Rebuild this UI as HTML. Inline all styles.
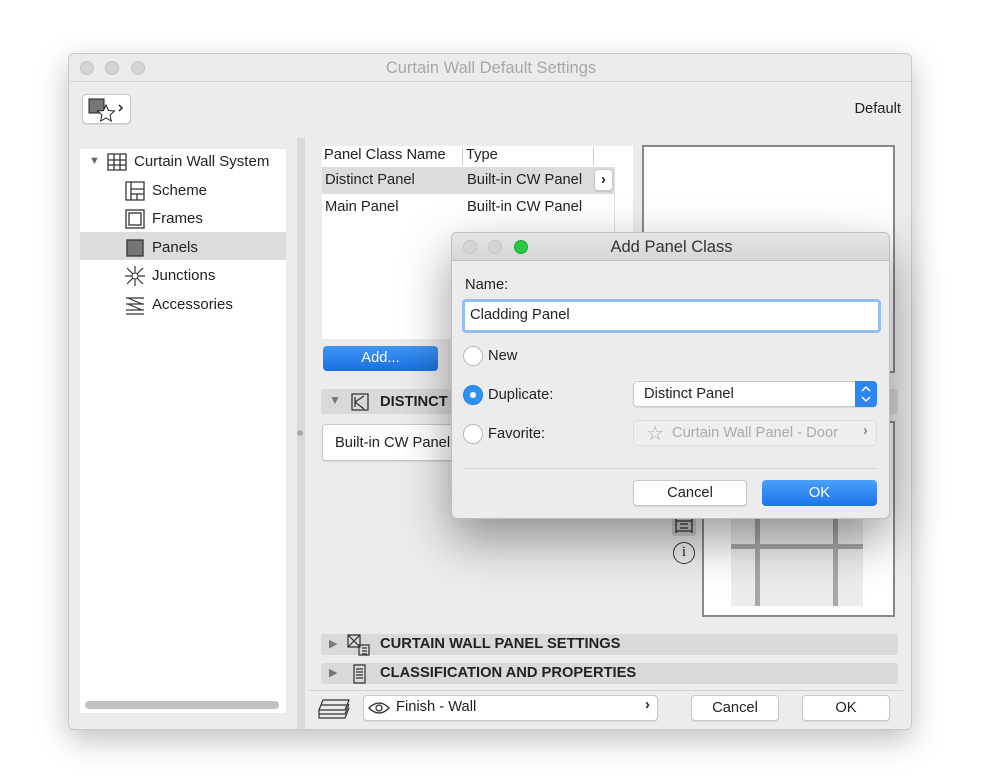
<!DOCTYPE html>
<html><head><style>
*{box-sizing:border-box;margin:0;padding:0}
body{width:999px;height:779px;background:#fff;font-family:"Liberation Sans",sans-serif;font-size:14.7px;color:#222;position:relative;overflow:hidden}
.a{position:absolute}
.win{left:68px;top:53px;width:844px;height:677px;background:#ececec;border:1px solid #c8c8c8;border-radius:6px;box-shadow:0 10px 30px rgba(0,0,0,.25);overflow:hidden}
.tl{width:14px;height:14px;border-radius:50%;background:#d4d4d4;border:1px solid #c4c4c4}
.btn{background:#fff;border:1px solid #c8c8c8;border-radius:4px;text-align:center;box-shadow:0 1px 1px rgba(0,0,0,.1)}
.sec{background:#d9d9d9;border-radius:3px;font-weight:bold;font-size:14.5px;letter-spacing:.3px}
.radio{width:20px;height:20px;border-radius:50%;background:#fff;border:1px solid #b8b8b8}
</style></head><body>
<div class="a win">
 <div class="a" style="left:0;top:0;width:844px;height:28px;background:#ebebeb;border-bottom:1px solid #d2d2d2"></div>
 <div class="a tl" style="left:11px;top:7px"></div><div class="a tl" style="left:36px;top:7px"></div><div class="a tl" style="left:62px;top:7px"></div>
 <div class="a" style="left:0;top:5px;width:844px;text-align:center;color:#a8a8a8;font-size:16.5px">Curtain Wall Default Settings</div>
 <div class="a btn" style="left:13px;top:40px;width:49px;height:30px;border-radius:5px">
  <svg width="49" height="30"><rect x="6" y="4" width="15" height="14" fill="#777" stroke="#222"/><path d="M23 10l2.5 5.5 6 .5-4.5 4 1.3 6-5.3-3-5.3 3 1.3-6-4.5-4 6-.5z" fill="#fff" stroke="#222"/><path d="M36 10l3 3-3 3" fill="none" stroke="#222" stroke-width="1.5"/></svg></div>
 <div class="a" style="right:10px;top:47px">Default</div>
 <div class="a" style="left:11px;top:95px;width:206px;height:564px;background:#fff"></div>
 <div class="a" style="left:11px;top:178px;width:206px;height:28px;background:#dcdcdc"></div>
 <div class="a" style="left:20px;top:101px;font-size:11px;color:#666">▼</div>
 <svg class="a" style="left:37px;top:97px" width="22" height="22"><path d="M2 3h18v16H2zM2 9h18M2 14h18M8 3v16M14 3v16" fill="none" stroke="#333" stroke-width="1.3"/></svg>
 <div class="a" style="left:65px;top:99px;font-size:15px">Curtain Wall System</div>
 <svg class="a" style="left:55px;top:126px" width="22" height="22"><path d="M2 2h18v18H2zM7 2v18M7 9h13M13 14v6M7 14h13" fill="none" stroke="#333" stroke-width="1.3"/></svg>
 <div class="a" style="left:83px;top:128px;font-size:15px">Scheme</div>
 <svg class="a" style="left:55px;top:154px" width="22" height="22"><rect x="2" y="2" width="18" height="18" fill="none" stroke="#333" stroke-width="1.3"/><rect x="5" y="5" width="12" height="12" fill="none" stroke="#333" stroke-width="1.3"/></svg>
 <div class="a" style="left:83px;top:156px;font-size:15px">Frames</div>
 <svg class="a" style="left:55px;top:183px" width="22" height="22"><rect x="3" y="3" width="16" height="16" fill="#777" stroke="#333" stroke-width="1.3"/></svg>
 <div class="a" style="left:83px;top:185px;font-size:15px">Panels</div>
 <svg class="a" style="left:55px;top:211px" width="22" height="22"><path d="M3 3l16 16M19 3L3 19M11 1v20M1 11h20" stroke="#333" stroke-width="1.2"/><circle cx="11" cy="11" r="3" fill="#fff" stroke="#333"/></svg>
 <div class="a" style="left:83px;top:213px;font-size:15px">Junctions</div>
 <svg class="a" style="left:55px;top:240px" width="22" height="22"><path d="M2 4h18M2 10h18M2 16h18M2 20h18M4 4l14 6M4 10l14 6" fill="none" stroke="#333" stroke-width="1.2"/></svg>
 <div class="a" style="left:83px;top:242px;font-size:15px">Accessories</div>
 <div class="a" style="left:16px;top:647px;width:194px;height:8px;border-radius:4px;background:#c2c2c2"></div>
 <div class="a" style="left:228px;top:84px;width:8px;height:600px;background:#dadada"></div>
 <div class="a" style="left:228px;top:376px;width:6px;height:6px;border-radius:50%;background:#aaa"></div>
 <div class="a" style="left:253px;top:92px;width:311px;height:193px;background:#fff"></div>
 <div class="a" style="left:253px;top:113px;width:292px;height:27px;background:#dcdcdc"></div>
 <div class="a" style="left:393px;top:93px;width:1px;height:18px;background:#ccc"></div>
 <div class="a" style="left:524px;top:93px;width:1px;height:18px;background:#ccc"></div>
 <div class="a" style="left:545px;top:113px;width:1px;height:172px;background:#ddd"></div>
 <div class="a" style="left:255px;top:93px">Panel Class Name</div><div class="a" style="left:397px;top:93px">Type</div>
 <div class="a" style="left:256px;top:118px">Distinct Panel</div><div class="a" style="left:398px;top:118px">Built-in CW Panel</div>
 <div class="a btn" style="left:525px;top:115px;width:19px;height:22px;font-weight:bold;line-height:20px">›</div>
 <div class="a" style="left:256px;top:145px">Main Panel</div><div class="a" style="left:398px;top:145px">Built-in CW Panel</div>
 <div class="a" style="left:254px;top:292px;width:115px;height:25px;border-radius:4px;background:linear-gradient(#3e96f5,#1a6fe0);color:#fff;text-align:center;line-height:25px">Add...</div>
 <div class="a" style="left:573px;top:91px;width:253px;height:228px;background:#fff;border:2px solid #888"></div>
 <div class="a sec" style="left:252px;top:335px;width:577px;height:25px"></div>
 <div class="a" style="left:260px;top:339px;font-size:12px;color:#777">▼</div>
 <svg class="a" style="left:281px;top:338px" width="20" height="20"><path d="M2 2h16v16H2zM5 5v10M5 10l9-6M5 10l9 7" fill="none" stroke="#333" stroke-width="1.3"/></svg>
 <div class="a" style="left:311px;top:340px;font-weight:bold">DISTINCT</div>
 <div class="a btn" style="left:253px;top:370px;width:150px;height:37px;padding:10px 12px;text-align:left">Built-in CW Panel</div>
 <div class="a" style="left:633px;top:367px;width:193px;height:196px;background:#fff;border:2px solid #888"></div>
 <div class="a" style="left:662px;top:452px;width:132px;height:100px;background:#ececec"></div>
 <div class="a" style="left:662px;top:490px;width:132px;height:5px;background:#a8a8a8"></div>
 <div class="a" style="left:686px;top:452px;width:5px;height:100px;background:#a8a8a8"></div>
 <div class="a" style="left:764px;top:452px;width:5px;height:100px;background:#a8a8a8"></div>
 <div class="a" style="left:603px;top:462px;width:24px;height:20px;background:#cfcfcf;border-radius:3px"></div>
 <svg class="a" style="left:605px;top:463px" width="20" height="18"><path d="M2 2v14M18 2v14M2 4h16M2 14h16M6 7h8M6 11h8" fill="none" stroke="#333" stroke-width="1.3"/></svg>
 <div class="a" style="left:604px;top:488px;width:22px;height:22px;border:1.5px solid #333;border-radius:50%;text-align:center;font-size:15px;line-height:19px;font-family:'Liberation Serif'">i</div>
 <div class="a sec" style="left:252px;top:580px;width:577px;height:21px"></div>
 <div class="a" style="left:260px;top:583px;font-size:11px;color:#777">▶</div>
 <svg class="a" style="left:277px;top:579px" width="26" height="24"><path d="M2 2h12v12H2zM2 2l12 12M14 2L2 14M13 12h10v10H13zM16 15h5M16 18h5M16 21h5" fill="none" stroke="#333" stroke-width="1.2"/></svg>
 <div class="a" style="left:311px;top:582px;font-weight:bold">CURTAIN WALL PANEL SETTINGS</div>
 <div class="a sec" style="left:252px;top:609px;width:577px;height:21px"></div>
 <div class="a" style="left:260px;top:612px;font-size:11px;color:#777">▶</div>
 <svg class="a" style="left:283px;top:609px" width="16" height="22"><path d="M2 2h11v18H2zM4 6h7M4 9h7M4 12h7M4 15h7" fill="none" stroke="#333" stroke-width="1.2"/></svg>
 <div class="a" style="left:311px;top:611px;font-weight:bold">CLASSIFICATION AND PROPERTIES</div>
 <div class="a" style="left:240px;top:636px;width:594px;height:1px;background:#d0d0d0"></div>
 <svg class="a" style="left:248px;top:642px" width="34" height="26"><path d="M6 4h26l-4 10H2zM4 9h26M2 14l0 4h26l4-10M2 18v4h26l4-10" fill="none" stroke="#333" stroke-width="1.2"/></svg>
 <div class="a btn" style="left:294px;top:641px;width:295px;height:26px"></div>
 <svg class="a" style="left:299px;top:647px" width="22" height="14"><path d="M1 7Q11-3 21 7Q11 17 1 7z" fill="none" stroke="#333" stroke-width="1.3"/><circle cx="11" cy="7" r="3" fill="none" stroke="#333" stroke-width="1.3"/></svg>
 <div class="a" style="left:327px;top:645px">Finish - Wall</div>
 <div class="a" style="left:576px;top:643px;font-weight:bold">›</div>
 <div class="a btn" style="left:622px;top:641px;width:88px;height:26px;line-height:24px">Cancel</div>
 <div class="a btn" style="left:733px;top:641px;width:88px;height:26px;line-height:24px">OK</div>
</div>
<div class="a" style="left:451px;top:232px;width:439px;height:287px;background:#ececec;border:1px solid #bdbdbd;border-radius:6px;box-shadow:0 20px 50px rgba(0,0,0,.4);overflow:hidden">
 <div class="a" style="left:0;top:0;width:439px;height:28px;background:linear-gradient(#e6e6e6,#d6d6d6);border-bottom:1px solid #c0c0c0"></div>
 <div class="a tl" style="left:11px;top:7px"></div><div class="a tl" style="left:36px;top:7px"></div>
 <div class="a tl" style="left:62px;top:7px;background:#2ac840;border-color:#22a833"></div>
 <div class="a" style="left:0;top:5px;width:439px;text-align:center;font-size:16.5px;color:#333">Add Panel Class</div>
 <div class="a" style="left:13px;top:44px">Name:</div>
 <div class="a" style="left:10px;top:66px;width:419px;height:34px;border:3px solid #94bdf0;border-radius:4px;background:#fff;padding:5px 5px">Cladding Panel</div>
 <div class="a radio" style="left:11px;top:113px"></div><div class="a" style="left:36px;top:115px">New</div>
 <div class="a radio" style="left:11px;top:152px;background:#2d8ff7;border-color:#2b7fe0"><div style="width:6px;height:6px;background:#fff;border-radius:50%;margin:6px"></div></div>
 <div class="a" style="left:36px;top:154px">Duplicate:</div>
 <div class="a radio" style="left:11px;top:191px"></div><div class="a" style="left:36px;top:193px">Favorite:</div>
 <div class="a btn" style="left:181px;top:148px;width:244px;height:26px;text-align:left;padding:4px 10px">Distinct Panel</div>
 <div class="a" style="left:403px;top:148px;width:22px;height:26px;background:#2d86f0;border-radius:0 4px 4px 0"><svg width="22" height="26"><path d="M7 10l4-4 4 4M7 16l4 4 4-4" fill="none" stroke="#fff" stroke-width="1.5"/></svg></div>
 <div class="a" style="left:181px;top:187px;width:244px;height:26px;border:1px solid #dcdcdc;border-radius:4px;background:#efefef"></div>
 <div class="a" style="left:194px;top:188px;color:#aaa;font-size:20px">☆</div>
 <div class="a" style="left:220px;top:192px;color:#aaa">Curtain Wall Panel - Door</div>
 <div class="a" style="left:411px;top:190px;color:#888;font-weight:bold">›</div>
 <div class="a" style="left:11px;top:235px;width:414px;height:1px;background:#d4d4d4"></div>
 <div class="a btn" style="left:181px;top:247px;width:114px;height:26px;line-height:24px">Cancel</div>
 <div class="a" style="left:310px;top:247px;width:115px;height:26px;border-radius:4px;background:linear-gradient(#4aa0f8,#1c74ea);color:#fff;text-align:center;line-height:26px">OK</div>
</div>
</body></html>
